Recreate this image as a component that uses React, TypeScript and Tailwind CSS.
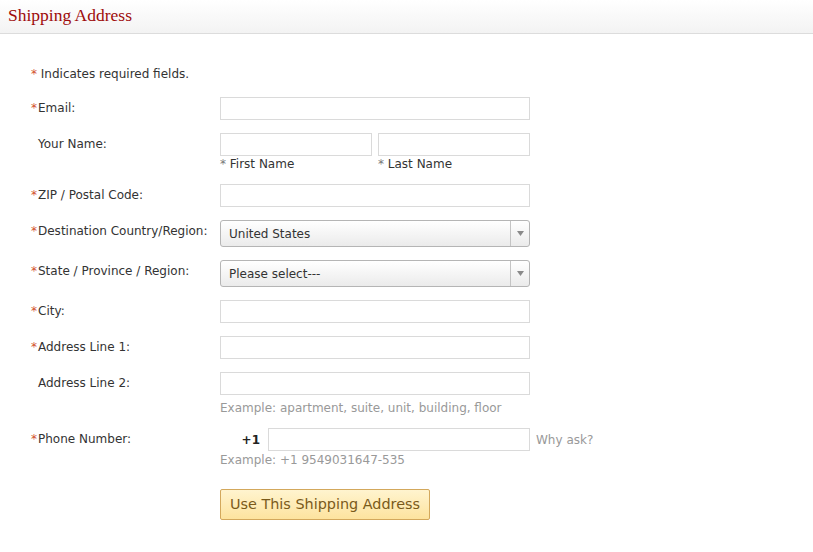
import React from "react";

const Star = () => <span className="inline-block w-[7px] text-[#d2502d]">*</span>;

function Label({ req, children }: { req?: boolean; children: React.ReactNode }) {
  return (
    <div className="mt-[2px] leading-[18px] text-[#333]">
      {req ? <Star /> : <span className="inline-block w-[7px]" />}
      {children}
    </div>
  );
}

const Input = ({ className = "" }: { className?: string }) => (
  <div className={"h-[23px] border border-[#dadada] bg-white " + className} />
);

function Select({ value }: { value: string }) {
  return (
    <div className="flex h-[27px] w-[310px] rounded-[3px] border border-[#b5b5b5] bg-gradient-to-b from-white to-[#ebebeb]">
      <div className="flex-1 pl-[8px] pt-[1px] leading-[25px] text-[#333]">{value}</div>
      <div className="flex w-[19px] items-center justify-center border-l border-[#c4c4c4]">
        <svg width="7" height="5" viewBox="0 0 7 5">
          <path d="M0 0 H7 L3.5 5 Z" fill="#8a8a8a" />
        </svg>
      </div>
    </div>
  );
}

function Row({ label, req, children }: { label: string; req?: boolean; children: React.ReactNode }) {
  return (
    <div className="grid grid-cols-[189px_1fr] items-start">
      <Label req={req}>{label}</Label>
      <div>{children}</div>
    </div>
  );
}

export default function App() {
  return (
    <div
      className="h-[552px] w-[813px] bg-white text-[12px] text-[#333]"
      style={{ fontFamily: '"DejaVu Sans", Verdana, sans-serif' }}
    >
      <div className="flex h-[34px] items-center border-b border-[#dcdcdc] bg-gradient-to-b from-white to-[#f3f3f3] pb-[5px] pl-[8px]">
        <h1
          className="mt-[2px] text-[17.5px] text-[#9e0b0b]"
          style={{ fontFamily: '"Liberation Serif", Georgia, serif' }}
        >
          Shipping Address
        </h1>
      </div>
      <div className="pl-[31px] pt-[31px]">
        <div className="leading-[18px]">
          <span className="text-[#d2502d]">*</span> Indicates required fields.
        </div>
        <div className="mt-[14px] flex flex-col gap-[13px]">
          <Row label="Email:" req>
            <Input className="w-[310px]" />
          </Row>
          <Row label="Your Name:">
            <div className="flex gap-[6px]">
              <div className="w-[152px]">
                <Input />
                <div className="mt-[2px] leading-[13px]">
                  <span className="text-[#777]">*</span> First Name
                </div>
              </div>
              <div className="w-[152px]">
                <Input />
                <div className="mt-[2px] leading-[13px]">
                  <span className="text-[#777]">*</span> Last Name
                </div>
              </div>
            </div>
          </Row>
          <Row label="ZIP / Postal Code:" req>
            <Input className="w-[310px]" />
          </Row>
          <Row label="Destination Country/Region:" req>
            <Select value="United States" />
          </Row>
          <Row label="State / Province / Region:" req>
            <Select value="Please select---" />
          </Row>
          <Row label="City:" req>
            <Input className="w-[310px]" />
          </Row>
          <Row label="Address Line 1:" req>
            <Input className="w-[310px]" />
          </Row>
          <Row label="Address Line 2:">
            <Input className="w-[310px]" />
            <div className="mt-[7px] leading-[13px] text-[#999]">
              Example: apartment, suite, unit, building, floor
            </div>
          </Row>
          <Row label="Phone Number:" req>
            <div className="flex items-center">
              <div className="w-[48px] pr-[8px] text-right font-bold text-[#222]">+1</div>
              <Input className="w-[262px]" />
              <div className="ml-[6px] text-[#999]">Why ask?</div>
            </div>
            <div className="mt-[3px] leading-[13px] text-[#999]">Example: +1 9549031647-535</div>
          </Row>
          <div className="mt-[9px] pl-[189px]">
            <button className="h-[31px] w-[210px] rounded-[2px] border border-[#d3a85c] bg-gradient-to-b from-[#fff4cf] to-[#fde39e] text-[14.4px] text-[#7a5a1a]">
              Use This Shipping Address
            </button>
          </div>
        </div>
      </div>
    </div>
  );
}
